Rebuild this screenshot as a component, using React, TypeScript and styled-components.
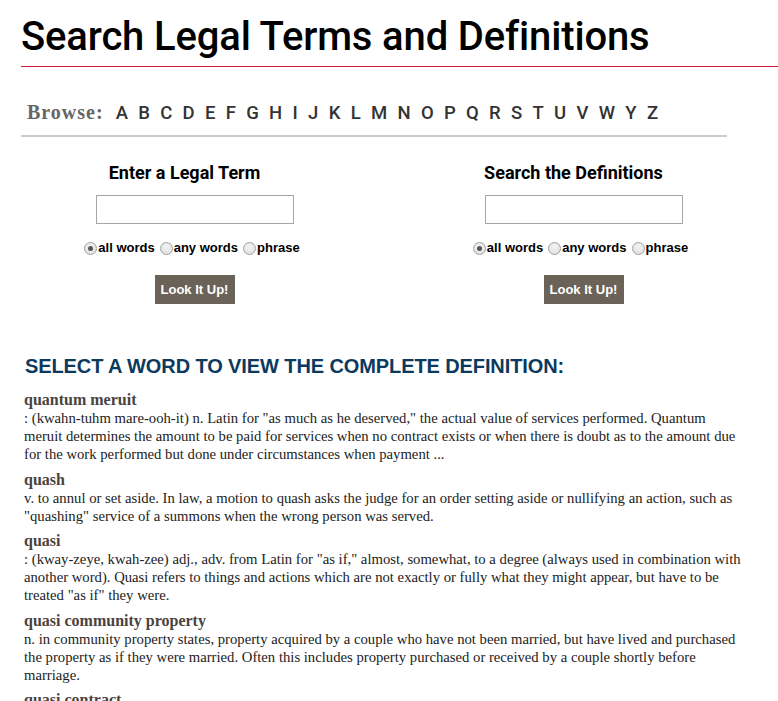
import React from "react";
import styled, { createGlobalStyle } from "styled-components";

const Global = createGlobalStyle`
  html, body { margin: 0; padding: 0; background: #fff; }
  body { font-family: "Liberation Serif", serif; color: #222; overflow: hidden; }
`;

const Page = styled.div`
  width: 778px;
`;

const TitleBar = styled.header`
  margin-left: 21px;
  padding-top: 13px;
  padding-bottom: 6px;
  border-bottom: 1px solid #cf1b3c;
`;

const Title = styled.h1`
  margin: 0;
  font-family: Roboto, "Liberation Sans", sans-serif;
  font-weight: 500;
  font-size: 40px;
  line-height: 47px;
  color: #000;
  letter-spacing: -0.15px;
`;

const BrowseBar = styled.nav`
  margin: 34px 0 0 21px;
  width: 706px;
  padding: 0 0 11px 6px;
  box-sizing: border-box;
  border-bottom: 2px solid #cccccc;
  display: flex;
  align-items: baseline;
`;

const BrowseLabel = styled.span`
  font-family: "Liberation Serif", serif;
  font-weight: 700;
  font-size: 20px;
  letter-spacing: 1px;
  color: #666;
  margin-right: 12px;
`;

const Letters = styled.div`
  display: flex;
  gap: 10.3px;
`;

const Letter = styled.a`
  font-family: Roboto, "Liberation Sans", sans-serif;
  font-weight: 500;
  font-size: 18.5px;
  line-height: 1.2;
  color: #333;
  text-decoration: none;
`;

const Forms = styled.section`
  display: grid;
  grid-template-columns: 1fr 1fr;
  margin-top: 25px;
`;

const SearchForm = styled.form`
  display: flex;
  flex-direction: column;
  align-items: center;
`;

const FormHeading = styled.h3`
  margin: 0 20px 0 0;
  font-family: Roboto, "Liberation Sans", sans-serif;
  font-weight: 700;
  font-size: 18px;
  line-height: 21px;
  color: #000;
`;

const TextInput = styled.input`
  margin-top: 12px;
  width: 198px;
  height: 29px;
  box-sizing: border-box;
  border: 1px solid #a6a6a6;
  padding: 2px 4px;
  font-size: 13px;
`;

const RadioRow = styled.div<{ $shift?: number }>`
  margin-top: 16px;
  margin-right: ${(p) => p.$shift ?? 0}px;
  display: flex;
  align-items: center;
  font-family: "Liberation Sans", Arial, sans-serif;
  font-weight: 700;
  font-size: 13px;
  line-height: 16px;
  color: #000;
`;

const RadioLabel = styled.label`
  display: flex;
  align-items: center;
  margin-right: 5px;
  &:last-child { margin-right: 0; }
`;

const Radio = styled.input`
  appearance: none;
  -webkit-appearance: none;
  margin: 0 1px 0 0;
  width: 13px;
  height: 13px;
  border-radius: 50%;
  border: 1px solid #a0a0a0;
  background: radial-gradient(circle at 50% 35%, #f4f4f4 0%, #dcdcdc 100%);
  box-sizing: border-box;
  position: relative;
  &:checked::after {
    content: "";
    position: absolute;
    left: 3px;
    top: 3px;
    width: 5px;
    height: 5px;
    border-radius: 50%;
    background: #555;
  }
`;

const SubmitButton = styled.button`
  margin-top: 19px;
  width: 80px;
  height: 29px;
  border: none;
  background: #6b6358;
  color: #fff;
  font-family: "Liberation Sans", Arial, sans-serif;
  font-weight: 700;
  font-size: 13px;
  padding: 0;
`;

const Results = styled.section`
  margin-top: 51px;
  padding-left: 24px;
  width: 720px;
`;

const ResultsHeading = styled.h2`
  margin: 0 0 14px 1px;
  font-family: "Liberation Sans", Arial, sans-serif;
  font-weight: 700;
  font-size: 20px;
  line-height: 22px;
  color: #0b3a5e;
  letter-spacing: -0.1px;
`;

const Entry = styled.div`
  margin-bottom: 7.5px;
  font-size: 14.7px;
  line-height: 18px;
`;

const Term = styled.a`
  display: block;
  font-weight: 700;
  font-size: 16px;
  color: #4a4340;
  text-decoration: none;
`;

const Def = styled.div`
  color: #222;
`;

const LETTERS = "ABCDEFGHIJKLMNOPQRSTUVWYZ".split("");

const ENTRIES = [
  {
    term: "quantum meruit",
    def: ': (kwahn-tuhm mare-ooh-it) n. Latin for "as much as he deserved," the actual value of services performed. Quantum meruit determines the amount to be paid for services when no contract exists or when there is doubt as to the amount due for the work performed but done under circumstances when payment ...',
  },
  {
    term: "quash",
    def: 'v. to annul or set aside. In law, a motion to quash asks the judge for an order setting aside or nullifying an action, such as "quashing" service of a summons when the wrong person was served.',
  },
  {
    term: "quasi",
    def: ': (kway-zeye, kwah-zee) adj., adv. from Latin for "as if," almost, somewhat, to a degree (always used in combination with another word). Quasi refers to things and actions which are not exactly or fully what they might appear, but have to be treated "as if" they were.',
  },
  {
    term: "quasi community property",
    def: "n. in community property states, property acquired by a couple who have not been married, but have lived and purchased the property as if they were married. Often this includes property purchased or received by a couple shortly before marriage.",
  },
  {
    term: "quasi contract",
    def: "n. a situation in which there is an obligation as if there were a contract, even though no contract was made.",
  },
];

function Form({ heading, shift }: { heading: string; shift: number }) {
  const name = heading.replace(/\s/g, "");
  return (
    <SearchForm onSubmit={(e) => e.preventDefault()}>
      <FormHeading>{heading}</FormHeading>
      <TextInput type="text" />
      <RadioRow $shift={shift}>
        <RadioLabel>
          <Radio type="radio" name={name} defaultChecked />
          all words
        </RadioLabel>
        <RadioLabel>
          <Radio type="radio" name={name} />
          any words
        </RadioLabel>
        <RadioLabel>
          <Radio type="radio" name={name} />
          phrase
        </RadioLabel>
      </RadioRow>
      <SubmitButton type="submit">Look It Up!</SubmitButton>
    </SearchForm>
  );
}

export default function App() {
  return (
    <Page>
      <Global />
      <TitleBar>
        <Title>Search Legal Terms and Definitions</Title>
      </TitleBar>
      <BrowseBar>
        <BrowseLabel>Browse:</BrowseLabel>
        <Letters>
          {LETTERS.map((l) => (
            <Letter key={l} href="#">
              {l}
            </Letter>
          ))}
        </Letters>
      </BrowseBar>
      <Forms>
        <Form heading="Enter a Legal Term" shift={5} />
        <Form heading="Search the Definitions" shift={6} />
      </Forms>
      <Results>
        <ResultsHeading>SELECT A WORD TO VIEW THE COMPLETE DEFINITION:</ResultsHeading>
        {ENTRIES.map((e) => (
          <Entry key={e.term}>
            <Term href="#">{e.term}</Term>
            <Def>{e.def}</Def>
          </Entry>
        ))}
      </Results>
    </Page>
  );
}
